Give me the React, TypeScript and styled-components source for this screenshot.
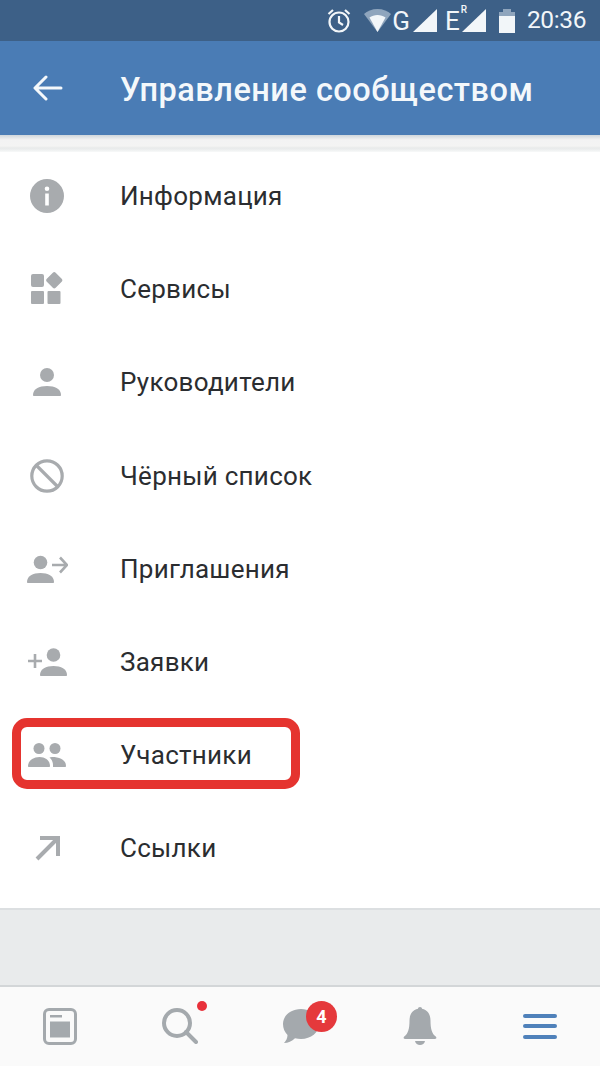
import React from "react";
import styled, { createGlobalStyle } from "styled-components";

const Global = createGlobalStyle`
  html, body { margin: 0; padding: 0; background: #fff; }
  body { font-family: Roboto, "Liberation Sans", sans-serif; }
  * { box-sizing: border-box; }
`;

const Screen = styled.div`
  width: 600px;
  height: 1066px;
  display: flex;
  flex-direction: column;
  overflow: hidden;
  background: #e9ebec;
`;

const StatusBar = styled.div`
  height: 41px;
  flex: none;
  background: #3d6087;
  display: flex;
  align-items: center;
  justify-content: flex-end;
  padding-right: 14px;
  color: #f2f6f9;
`;

const StatusIcon = styled.svg<{ $ml: number }>`
  margin-left: ${(p) => p.$ml}px;
  display: block;
  flex: none;
`;

const NetLetter = styled.span<{ $ml: number }>`
  margin-left: ${(p) => p.$ml}px;
  font-size: 26px;
  line-height: 1;
  font-weight: 400;
`;

const RoamWrap = styled.span`
  display: flex;
  align-items: flex-start;
  margin-left: 8px;
`;

const RoamMark = styled.sup`
  font-size: 10px;
  line-height: 1;
  margin: -3px -8px 0 1px;
  font-weight: 500;
  vertical-align: baseline;
`;

const Clock = styled.span`
  margin-left: 12px;
  font-size: 24.5px;
  line-height: 1;
  letter-spacing: -0.4px;
`;

const Header = styled.header`
  height: 94px;
  flex: none;
  background: #4a7cb5;
  display: flex;
  align-items: center;
  color: #f4f8fb;
`;

const BackSlot = styled.div`
  width: 120px;
  flex: none;
  padding-left: 33px;
  display: flex;
`;

const Title = styled.h1`
  margin: 3px 0 0;
  font-size: 32.5px;
  font-weight: 500;
  letter-spacing: 0.5px;
  white-space: nowrap;
`;

const ShadowBand = styled.div`
  height: 17px;
  flex: none;
  background: linear-gradient(#cfd6dc 0, #f3f3f3 5px, #f4f4f3 11px, #e8eaea 13px, #eef0f0 15px, #f8f9f9 17px);
`;

const List = styled.ul`
  list-style: none;
  margin: 0;
  padding: 0 0 10.4px;
  background: #fff;
  flex: none;
  border-bottom: 2px solid #dcdfe1;
`;

const Row = styled.li`
  position: relative;
  height: 93.2px;
  padding-bottom: 5.2px;
  display: flex;
  align-items: center;
`;

const IconSlot = styled.div`
  width: 94px;
  margin-right: 26px;
  flex: none;
  display: flex;
  justify-content: center;
  color: #a8abae;
`;

const Label = styled.span`
  font-size: 26px;
  color: #2b2d30;
  letter-spacing: 0.27px;
`;

const Highlight = styled.div`
  position: absolute;
  left: 12px;
  top: 7px;
  width: 288px;
  height: 71px;
  border: 9px solid #e5342f;
  border-radius: 15px;
  pointer-events: none;
`;

const Spacer = styled.div`
  flex: 1;
  background: #e9ebec;
`;

const TabBar = styled.nav`
  height: 81px;
  flex: none;
  background: #fafafa;
  border-top: 2px solid #d3d6d8;
  display: grid;
  grid-template-columns: repeat(5, 1fr);
  align-items: center;
  padding-bottom: 1px;
`;

const Tab = styled.div<{ $active?: boolean }>`
  position: relative;
  display: flex;
  justify-content: center;
  color: ${(p) => (p.$active ? "#4f81ba" : "#a4a9ad")};
`;

const Dot = styled.span`
  position: absolute;
  left: 77px;
  top: -7px;
  width: 10px;
  height: 10px;
  border-radius: 50%;
  background: #e8303a;
`;

const Badge = styled.span`
  position: absolute;
  left: 66px;
  top: -7px;
  width: 31px;
  height: 31px;
  border-radius: 50%;
  background: #e5393c;
  color: #fff;
  font-size: 18px;
  font-weight: 700;
  display: flex;
  align-items: center;
  justify-content: center;
`;

const Ic = ({ w, h, children }: { w: number; h: number; children: React.ReactNode }) => (
  <svg width={w} height={h} viewBox={`0 0 ${w} ${h}`} fill="currentColor" style={{ display: "block" }}>
    {children}
  </svg>
);

const InfoIcon = () => (
  <Ic w={34} h={34}>
    <path fillRule="evenodd" d="M17 0a17 17 0 1 1 0 34a17 17 0 0 1 0-34ZM15.200 14.500v12h3.600v-12ZM17 7.400a2.300 2.300 0 1 0 0 4.600a2.300 2.300 0 0 0 0-4.600Z" />
  </Ic>
);
const ServicesIcon = () => (
  <Ic w={34} h={34}>
    <rect x="1" y="2" width="13" height="13" rx="2" />
    <rect x="1" y="19" width="13" height="13" rx="1" />
    <rect x="17.500" y="19" width="13" height="13" rx="1" />
    <rect x="18" y="2" width="12.500" height="12.500" rx="2" transform="rotate(45 24.250 8.250)" />
  </Ic>
);
const PersonIcon = () => (
  <Ic w={28} h={28}>
    <circle cx="14" cy="7" r="7" />
    <path d="M0 27c0-6 6-9 14-9s14 3 14 9c0 .6-.5 1-1 1H1c-.5 0-1-.4-1-1Z" />
  </Ic>
);
const BlockIcon = () => (
  <Ic w={34} h={34}>
    <circle cx="17" cy="17" r="15.200" fill="none" stroke="currentColor" strokeWidth="3.200" />
    <path d="M6.500 6.500 27.500 27.500" stroke="currentColor" strokeWidth="3.200" />
  </Ic>
);
const InviteIcon = () => (
  <Ic w={41} h={28}>
    <circle cx="13.500" cy="7.500" r="6.800" />
    <path d="M0 27c0-6 6-9 13.500-9S27 21 27 27c0 .6-.5 1-1 1H1c-.5 0-1-.4-1-1Z" />
    <path d="M25 10h14M33 2.500l7 7.500-7 7.500" fill="none" stroke="currentColor" strokeWidth="2.600" />
  </Ic>
);
const RequestIcon = () => (
  <Ic w={40} h={28}>
    <circle cx="26.500" cy="7" r="6.800" />
    <path d="M13 27c0-6 6-9 13.500-9S40 21 40 27c0 .6-.5 1-1 1H14c-.5 0-1-.4-1-1Z" />
    <path d="M1 13h14M8 6v14" fill="none" stroke="currentColor" strokeWidth="2.600" />
  </Ic>
);
const MembersIcon = () => (
  <Ic w={38} h={24}>
    <circle cx="11" cy="5.500" r="5.500" />
    <circle cx="27" cy="5.500" r="5.500" />
    <path d="M0 23c0-5 5-9 11.500-9S22 18 22 23c0 .6-.4 1-1 1H1c-.6 0-1-.4-1-1Z" />
    <path d="M24 14c8 0 14 3 14 9 0 .6-.4 1-1 1H25c.2-4-.5-7-3.500-9.500.7-.3 1.500-.5 2.500-.5Z" />
  </Ic>
);
const LinkIcon = () => (
  <Ic w={26} h={26}>
    <path d="M3 24 23 4M6 3h18v18" fill="none" stroke="currentColor" strokeWidth="4" />
  </Ic>
);
const BackIcon = () => (
  <svg width="30" height="26" viewBox="0 0 30 26" fill="none" stroke="currentColor" strokeWidth="3" strokeLinecap="round" strokeLinejoin="round" style={{ display: "block" }}>
    <path d="M28 13H2.500M13 2 2 13l11 11" />
  </svg>
);
const NewsIcon = () => (
  <Ic w={34} h={37}>
    <rect x="1.500" y="1.500" width="31" height="34" rx="4.500" fill="none" stroke="currentColor" strokeWidth="3" />
    <rect x="7" y="7" width="12" height="2.500" />
    <rect x="7" y="13.500" width="20" height="16" />
  </Ic>
);
const SearchIcon = () => (
  <Ic w={36} h={36}>
    <circle cx="15" cy="15" r="13" fill="none" stroke="currentColor" strokeWidth="4" />
    <path d="M24 24 34 34" stroke="currentColor" strokeWidth="4" strokeLinecap="round" />
  </Ic>
);
const ChatIcon = () => (
  <Ic w={37} h={36}>
    <path d="M19 1c10 0 18 6.500 18 15s-8 15-18 15c-2 0-4-.3-6-.8C10 33 6 35 2 35c2-2 3.500-5 3.500-8C2.500 24 1 20 1 16 1 7.500 9 1 19 1Z" />
  </Ic>
);
const BellIcon = () => (
  <Ic w={34} h={38}>
    <path d="M17 0c1.200 0 2 .8 2 1.800 6 1.200 8.500 6 8.500 12 0 8 1.500 13 5 15.500 1.300 1 1.200 2.700-.5 2.700H2c-1.700 0-1.800-1.700-.5-2.700 3.500-2.500 5-7.500 5-15.500 0-6 2.500-10.800 8.500-12C15 .8 15.800 0 17 0Z" />
    <path d="M12 34h10c-.5 2.500-2.500 4-5 4s-4.500-1.500-5-4Z" />
  </Ic>
);
const MenuIcon = () => (
  <Ic w={34} h={26}>
    <rect y="1" width="34" height="4" rx="2" />
    <rect y="11" width="34" height="4" rx="2" />
    <rect y="22" width="34" height="4" rx="2" />
  </Ic>
);

const items: [string, React.ReactNode][] = [
  ["Информация", <InfoIcon />],
  ["Сервисы", <ServicesIcon />],
  ["Руководители", <PersonIcon />],
  ["Чёрный список", <BlockIcon />],
  ["Приглашения", <InviteIcon />],
  ["Заявки", <RequestIcon />],
  ["Участники", <MembersIcon />],
  ["Ссылки", <LinkIcon />],
];

export default function App() {
  return (
    <Screen>
      <Global />
      <StatusBar>
        <StatusIcon $ml={0} width="24" height="25" viewBox="0 0 24 25" fill="none" stroke="currentColor" strokeWidth="2.200">
          <circle cx="12" cy="14" r="9.500" />
          <path d="M12 8v6.500l4 2.500M1.500 6 6 2M22.500 6 18 2" />
        </StatusIcon>
        <StatusIcon $ml={13} width="27" height="23" viewBox="0 0 27 23" fill="currentColor">
          <path d="M13.500 0C19 0 24 2 27 5L13.500 23 0 5C3 2 8 0 13.500 0Z" fill="#8fa5bd" />
          <path d="M5.500 8.500c2.200-1.600 5-2.500 8-2.500s5.800.9 8 2.500L13.500 23Z" />
        </StatusIcon>
        <NetLetter $ml={1}>G</NetLetter>
        <StatusIcon $ml={3} width="24" height="23" viewBox="0 0 24 23" fill="currentColor">
          <path d="M24 0v23H0Z" />
        </StatusIcon>
        <RoamWrap>
          <NetLetter $ml={0}>E</NetLetter>
          <RoamMark>R</RoamMark>
        </RoamWrap>
        <StatusIcon $ml={3} width="24" height="23" viewBox="0 0 24 23" fill="currentColor">
          <path d="M24 0v23H0Z" />
        </StatusIcon>
        <StatusIcon $ml={13} width="16" height="24" viewBox="0 0 16 24" fill="currentColor">
          <path d="M4 0h8v3h4v4H0V3h4Z" fill="#8fa5bd" />
          <rect y="7" width="16" height="17" />
        </StatusIcon>
        <Clock>20:36</Clock>
      </StatusBar>
      <Header>
        <BackSlot>
          <BackIcon />
        </BackSlot>
        <Title>Управление сообществом</Title>
      </Header>
      <ShadowBand />
      <List>
        {items.map(([label, icon]) => (
          <Row key={label}>
            <IconSlot>{icon}</IconSlot>
            <Label>{label}</Label>
            {label === "Участники" && <Highlight />}
          </Row>
        ))}
      </List>
      <Spacer />
      <TabBar>
        <Tab><NewsIcon /></Tab>
        <Tab><SearchIcon /><Dot /></Tab>
        <Tab><ChatIcon /><Badge>4</Badge></Tab>
        <Tab><BellIcon /></Tab>
        <Tab $active><MenuIcon /></Tab>
      </TabBar>
    </Screen>
  );
}
